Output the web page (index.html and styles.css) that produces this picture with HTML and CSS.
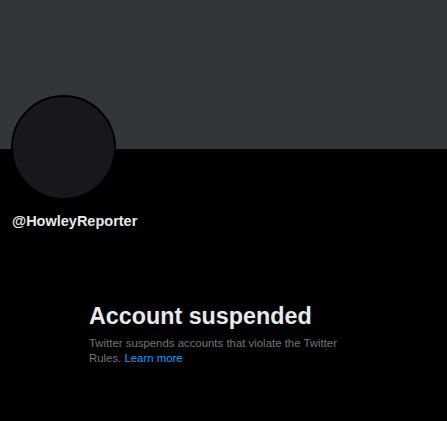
FILE: index.html
```html
<!DOCTYPE html>
<html lang="en">
<head>
<meta charset="utf-8">
<title>@HowleyReporter</title>
<link rel="stylesheet" href="styles.css">
</head>
<body>
<main class="profile">
  <div class="banner"></div>
  <section class="info">
    <div class="avatar"></div>
    <div class="handle">@HowleyReporter</div>
  </section>
  <section class="empty">
    <h1 class="empty-title">Account suspended</h1>
    <p class="empty-text">Twitter suspends accounts that violate the Twitter Rules. <a class="link" href="#">Learn more</a></p>
  </section>
</main>
</body>
</html>
```
FILE: styles.css
```css
html, body {
  margin: 0;
  padding: 0;
  background: #000;
}
body {
  font-family: "Liberation Sans", Arial, sans-serif;
  color: #e7e9ea;
  width: 447px;
  height: 421px;
  overflow: hidden;
}
.profile {
  display: flex;
  flex-direction: column;
}
.banner {
  height: 149px;
  background: #333639;
}
.info {
  padding-left: 11px;
  display: flex;
  flex-direction: column;
  align-items: flex-start;
}
.avatar {
  width: 101px;
  height: 101px;
  margin-top: -54px;
  border: 2px solid #000;
  border-radius: 50%;
  background: #16181c;
}
.handle {
  margin-top: 13px;
  margin-left: 1px;
  font-size: 14.5px;
  line-height: 17px;
  font-weight: 700;
  color: #e7e9ea;
}
.empty {
  width: 269px;
  margin: 72px auto 0;
}
.empty-title {
  margin: 0 0 6px;
  font-size: 23.3px;
  line-height: 28px;
  font-weight: 700;
  color: #e7e9ea;
}
.empty-text {
  margin: 0;
  font-size: 11.4px;
  line-height: 15px;
  color: #71767b;
}
.link {
  color: #1d9bf0;
  text-decoration: none;
}
```
